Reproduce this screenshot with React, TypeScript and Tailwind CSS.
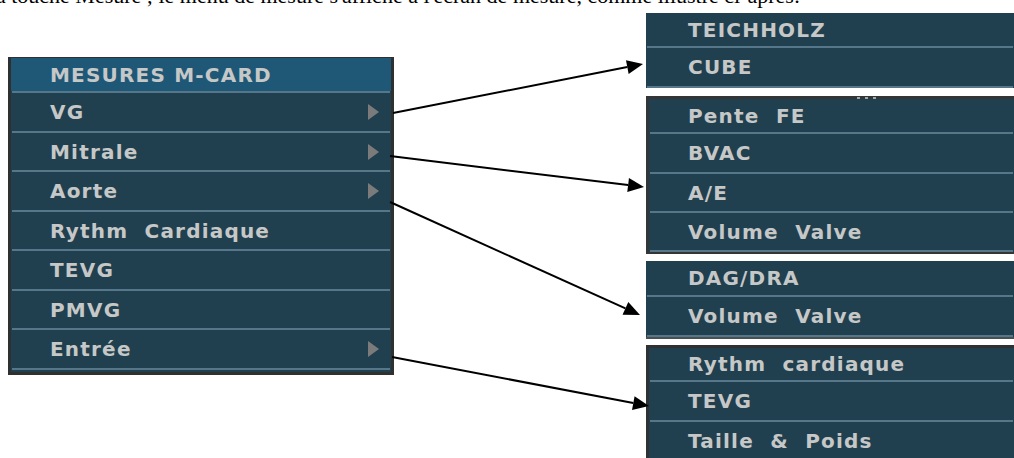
import React from 'react';

type Item = { label: string; sub?: boolean; h: string };

const leftItems: Item[] = [
  { label: 'VG', sub: true, h: 'h-[38px]' },
  { label: 'Mitrale', sub: true, h: 'h-[37px]' },
  { label: 'Aorte', sub: true, h: 'h-[38px]' },
  { label: 'Rythm  Cardiaque', h: 'h-[37px]' },
  { label: 'TEVG', h: 'h-[38px]' },
  { label: 'PMVG', h: 'h-[37px]' },
  { label: 'Entrée', sub: true, h: 'h-[38px]' },
];

const font = 'font-["DejaVu_Sans",sans-serif] font-bold text-[20px] tracking-[1.2px] text-[#c6c8c8] whitespace-pre';

function Sep() {
  return <div className="mx-px h-[2px] bg-[#557789]" />;
}

function SubArrow() {
  return (
    <svg width="11" height="16" viewBox="0 0 11 16">
      <polygon points="0,0 11,8 0,16" fill="#7b7b7b" />
    </svg>
  );
}

function Row({ label, sub, h, pad = 'pl-[39px]' }: Item & { pad?: string }) {
  return (
    <>
      <div className={`flex items-center justify-between pr-[12px] ${h} ${pad}`}>
        <span className={font}>{label}</span>
        {sub && <SubArrow />}
      </div>
      <Sep />
    </>
  );
}

// arrow from (x1,y1) to tip (x2,y2)
function Arrow({ x1, y1, x2, y2 }: { x1: number; y1: number; x2: number; y2: number }) {
  const dx = x2 - x1;
  const dy = y2 - y1;
  const len = Math.hypot(dx, dy);
  const ux = dx / len;
  const uy = dy / len;
  const bx = x2 - ux * 16;
  const by = y2 - uy * 16;
  const px = -uy * 7;
  const py = ux * 7;
  return (
    <g>
      <line x1={x1} y1={y1} x2={bx} y2={by} stroke="#000" strokeWidth="2" />
      <polygon points={`${x2},${y2} ${bx + px},${by + py} ${bx - px},${by - py}`} fill="#000" />
    </g>
  );
}

export default function App() {
  return (
    <div className="relative w-[1014px] h-[458px] overflow-hidden bg-white">
      {/* cut-off line of the document above */}
      <div className="flex h-[13px] w-[800px] justify-end overflow-hidden">
        <p className='-mt-[16px] shrink-0 whitespace-nowrap font-["Liberation_Serif",serif] text-[22px] leading-[24px] text-black'>
          En mode M, appuyez sur la touche Mesure ; le menu de mesure s'affiche à l'écran de mesure, comme illustré ci-après:
        </p>
      </div>

      <div className="flex">
        {/* main menu */}
        <div className="mt-[44px] ml-[8px] w-[386px] self-start border-x-[3px] border-t border-b-[3px] border-[#2f3030] bg-[#21404f] pb-[2px]">
          <div className="flex h-[33px] items-center bg-[#1f5877] pl-[39px]">
            <span className={font}>MESURES M-CARD</span>
          </div>
          <Sep />
          {leftItems.map((it) => (
            <Row key={it.label} {...it} />
          ))}
        </div>

        {/* sub menus */}
        <div className="ml-[252px] flex-1">
          <div className="bg-[#21404f]">
            <Row label="TEICHHOLZ" h="h-[33px]" pad="pl-[42px]" />
            <Row label="CUBE" h="h-[38px]" pad="pl-[42px]" />
          </div>

          <div className="relative mt-[8px] border-l-[3px] border-t-[3px] border-b-[2px] border-[#333536] bg-[#21404f]">
            <div className="absolute -top-[2px] left-[208px] flex gap-[5px]">
              <span className="h-[2px] w-[3px] bg-[#a0a8ac]" />
              <span className="h-[2px] w-[3px] bg-[#a0a8ac]" />
              <span className="h-[2px] w-[3px] bg-[#a0a8ac]" />
            </div>
            <Row label="Pente  FE" h="h-[33px]" />
            <Row label="BVAC" h="h-[38px]" />
            <Row label="A/E" h="h-[37px]" />
            <Row label="Volume  Valve" h="h-[37px]" />
          </div>

          <div className="mt-[7px] border-b-[2px] border-[#4a4f52] bg-[#21404f]">
            <Row label="DAG/DRA" h="h-[34px]" pad="pl-[42px]" />
            <Row label="Volume  Valve" h="h-[38px]" pad="pl-[42px]" />
          </div>

          <div className="mt-[6px] border-l-[3px] border-t-[3px] border-[#2f3132] bg-[#21404f]">
            <Row label="Rythm  cardiaque" h="h-[32px]" />
            <Row label="TEVG" h="h-[38px]" />
            <Row label="Taille  &  Poids" h="h-[38px]" />
          </div>
        </div>
      </div>

      <svg className="pointer-events-none absolute inset-0" width="1014" height="458">
        <Arrow x1={393} y1={113} x2={643} y2={64} />
        <Arrow x1={390} y1={156} x2={644} y2={187} />
        <Arrow x1={390} y1={202} x2={640} y2={315} />
        <Arrow x1={392} y1={357} x2={649} y2={406} />
      </svg>
    </div>
  );
}
